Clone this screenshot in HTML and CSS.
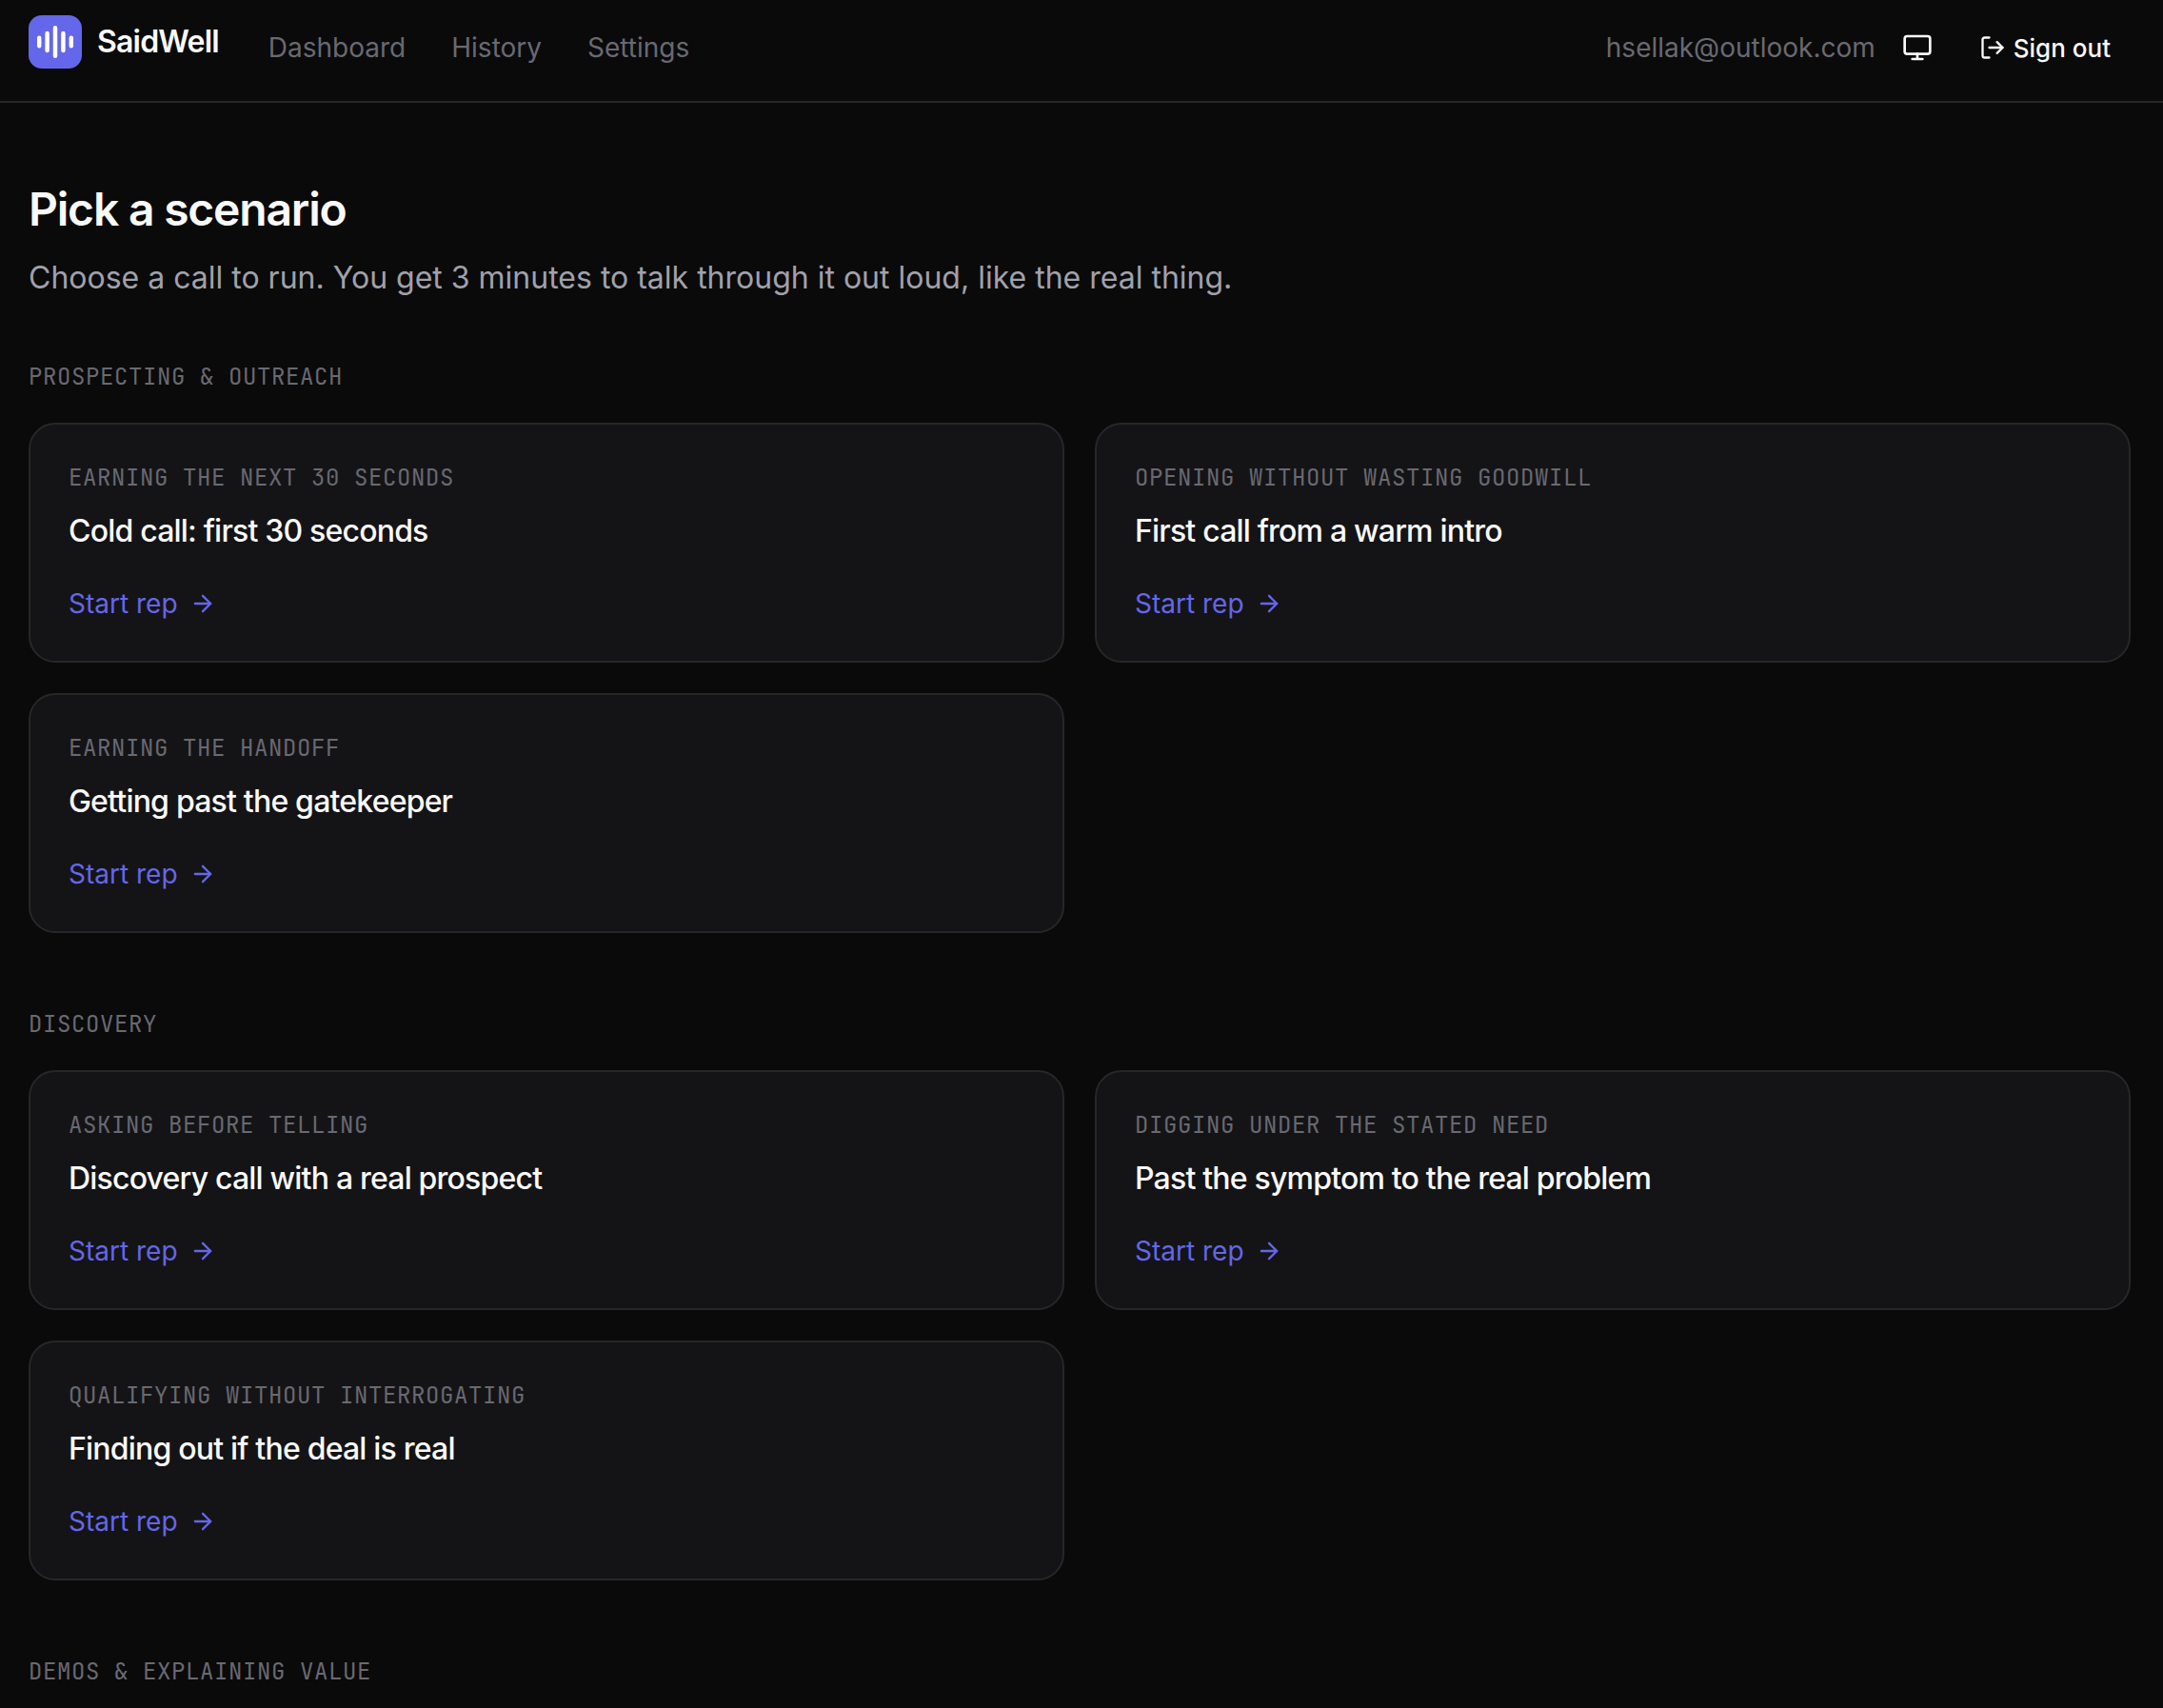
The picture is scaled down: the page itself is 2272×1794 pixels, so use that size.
FILE: index.html
```html
<!DOCTYPE html>
<html lang="en">
<head>
    <meta charset="UTF-8">
    <meta name="viewport" content="width=device-width, initial-scale=1.0">
    <title>SaidWell</title>
    <link rel="stylesheet" href="styles.css">
</head>
<body>
    <!-- shared icons -->
    <svg class="sprite" aria-hidden="true">
        <symbol id="arrow" viewBox="0 0 24 24">
            <path d="M5 12h14"/>
            <path d="m12 5 7 7-7 7"/>
        </symbol>
    </svg>

    <header class="header">
        <a class="logo" href="#">
            <svg class="logo-mark" viewBox="0 0 40 40" aria-hidden="true">
                <rect width="40" height="40" rx="10" fill="#6467e9"/>
                <path d="M8 17v6M14 13.5v13M20 9.5v21M26 13.5v13M32 17v6" stroke="#fff" stroke-width="3.2" stroke-linecap="round"/>
            </svg>
            <span>SaidWell</span>
        </a>
        <nav class="nav">
            <a href="#">Dashboard</a>
            <a href="#">History</a>
            <a href="#">Settings</a>
        </nav>
        <div class="account">
            <span class="email">hsellak@outlook.com</span>
            <button class="theme" type="button" aria-label="Theme">
                <svg class="icon icon-lg" viewBox="0 0 24 24" aria-hidden="true">
                    <rect width="20" height="14" x="2" y="3" rx="2"/>
                    <path d="M8 21h8M12 17v4"/>
                </svg>
            </button>
            <button class="signout" type="button">
                <svg class="icon" viewBox="0 0 24 24" aria-hidden="true">
                    <path d="m16 17 5-5-5-5"/>
                    <path d="M21 12H9"/>
                    <path d="M9 21H5a2 2 0 0 1-2-2V5a2 2 0 0 1 2-2h4"/>
                </svg>
                Sign out
            </button>
        </div>
    </header>

    <main class="main">
        <h1>Pick a scenario</h1>
        <p class="intro">Choose a call to run. You get 3 minutes to talk through it out loud, like the real thing.</p>

        <section class="group">
            <h2 class="label">Prospecting &amp; outreach</h2>
            <div class="cards">
                <a class="card" href="#">
                    <p class="label">Earning the next 30 seconds</p>
                    <h3>Cold call: first 30 seconds</h3>
                    <span class="start">Start rep <svg class="icon"><use href="#arrow"/></svg></span>
                </a>
                <a class="card" href="#">
                    <p class="label">Opening without wasting goodwill</p>
                    <h3>First call from a warm intro</h3>
                    <span class="start">Start rep <svg class="icon"><use href="#arrow"/></svg></span>
                </a>
                <a class="card" href="#">
                    <p class="label">Earning the handoff</p>
                    <h3>Getting past the gatekeeper</h3>
                    <span class="start">Start rep <svg class="icon"><use href="#arrow"/></svg></span>
                </a>
            </div>
        </section>

        <section class="group">
            <h2 class="label">Discovery</h2>
            <div class="cards">
                <a class="card" href="#">
                    <p class="label">Asking before telling</p>
                    <h3>Discovery call with a real prospect</h3>
                    <span class="start">Start rep <svg class="icon"><use href="#arrow"/></svg></span>
                </a>
                <a class="card" href="#">
                    <p class="label">Digging under the stated need</p>
                    <h3>Past the symptom to the real problem</h3>
                    <span class="start">Start rep <svg class="icon"><use href="#arrow"/></svg></span>
                </a>
                <a class="card" href="#">
                    <p class="label">Qualifying without interrogating</p>
                    <h3>Finding out if the deal is real</h3>
                    <span class="start">Start rep <svg class="icon"><use href="#arrow"/></svg></span>
                </a>
            </div>
        </section>

        <section class="group">
            <h2 class="label">Demos &amp; explaining value</h2>
        </section>
    </main>
</body>
</html>
```
FILE: styles.css
```css
* {
    box-sizing: border-box;
}

body {
    margin: 0;
    background-color: #0a0a0a;
    color: #fafafa;
    font-family: Inter, "Liberation Sans", sans-serif;
    font-size: 28px;
    line-height: 40px;
}

h1, h2, h3, p {
    margin: 0;
}

a {
    color: inherit;
    text-decoration: none;
}

button {
    display: flex;
    align-items: center;
    padding: 0;
    border: none;
    background: none;
    color: inherit;
    font-family: inherit;
    cursor: pointer;
}

.sprite {
    display: none;
}

.icon {
    width: 28px;
    height: 28px;
    flex: none;
    fill: none;
    stroke: currentColor;
    stroke-width: 2;
    stroke-linecap: round;
    stroke-linejoin: round;
}

.icon-lg {
    width: 32px;
    height: 32px;
}

/* Header */
.header {
    display: flex;
    align-items: center;
    padding: 16px 34px 22px 30px;
    border-bottom: 2px solid #27272a;
}

.logo {
    display: flex;
    align-items: center;
    align-self: flex-start;
    gap: 16px;
    font-size: 32px;
    font-weight: 600;
    letter-spacing: -0.025em;
}

.logo-mark {
    width: 56px;
    height: 56px;
}

.nav {
    display: flex;
    gap: 48px;
    margin-left: 52px;
    color: #696971;
}

.account {
    display: flex;
    align-items: center;
    height: 68px;
    margin-left: auto;
}

.email {
    color: #696971;
}

.theme {
    margin: 0 28px;
}

.signout {
    gap: 8px;
    padding: 0 21px;
    font-size: 26px;
    font-weight: 500;
}

/* Scenarios */
.main {
    padding: 80px 34px 0 30px;
}

h1 {
    margin-bottom: 16px;
    font-size: 48px;
    font-weight: 600;
    line-height: 64px;
    letter-spacing: -0.025em;
}

.intro {
    color: #a1a1aa;
    font-size: 32px;
    line-height: 48px;
}

.group {
    margin-top: 64px;
}

.group + .group {
    margin-top: 80px;
}

.label {
    color: #696971;
    font-family: "JetBrains Mono", "DejaVu Sans Mono", monospace;
    font-size: 24px;
    font-weight: 400;
    line-height: 32px;
    letter-spacing: 0.025em;
    text-transform: uppercase;
}

.cards {
    display: grid;
    grid-template-columns: 1fr 1fr;
    gap: 32px;
    margin-top: 32px;
}

.card {
    padding: 40px;
    border: 2px solid #27272a;
    border-radius: 28px;
    background-color: #141416;
}

h3 {
    margin: 16px 0 32px;
    font-size: 32px;
    font-weight: 500;
    line-height: 48px;
    letter-spacing: -0.025em;
}

.start {
    display: flex;
    align-items: center;
    gap: 12px;
    color: #6467e9;
}
```
